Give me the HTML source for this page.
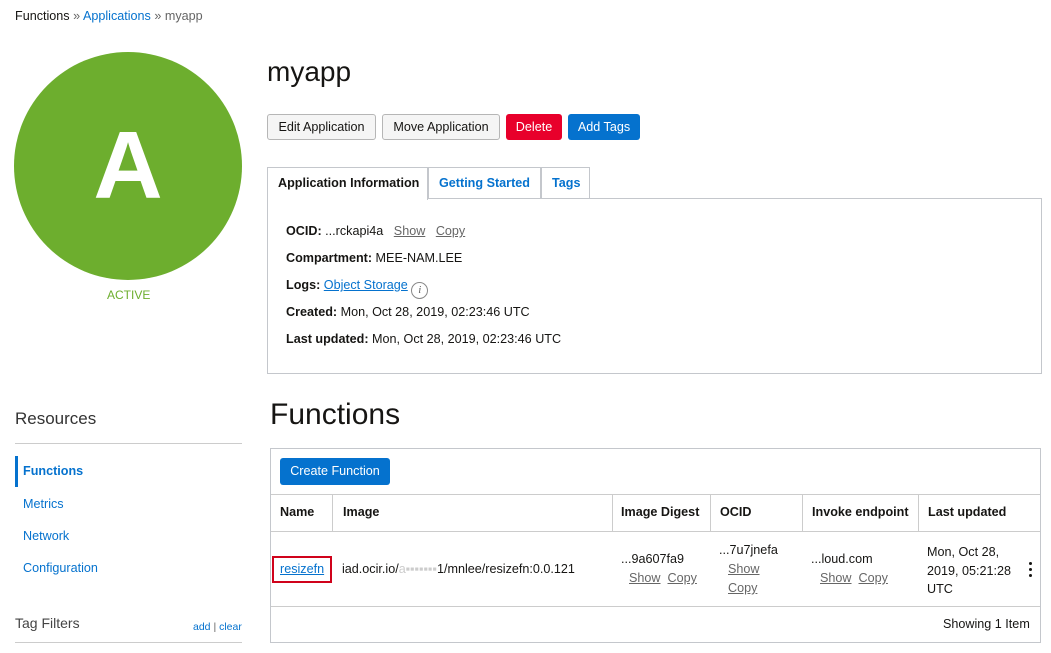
<!DOCTYPE html>
<html><head><meta charset="utf-8"><style>
*{margin:0;padding:0;box-sizing:border-box}
body{width:1051px;height:653px;background:#fff;font-family:"Liberation Sans",Arial,sans-serif;color:#161513;font-size:12.6px;position:relative;overflow:hidden}
.a{position:absolute;white-space:nowrap}
.blue{color:#0572ce}
.btn{position:absolute;height:26px;top:114px;border-radius:3px;font-size:12.6px;display:flex;align-items:center;justify-content:center}
.g{background:#f5f5f5;border:1px solid #b6b6b6;color:#161513}
.u{text-decoration:underline;color:#666}
b{font-weight:bold}
.lbl{position:absolute;left:286px}
.th{position:absolute;top:505px;font-weight:bold}
.vl{position:absolute;width:1px;background:#ccc;top:494px;height:38px}
</style></head><body>
<div class="a" style="left:15px;top:9px">Functions <span style="color:#666">»</span> <span class="blue">Applications</span> <span style="color:#666">» myapp</span></div>
<div class="a" style="left:14px;top:52px;width:228px;height:228px;border-radius:50%;background:#6dae2e;color:#fff;font-weight:bold;font-size:96px;text-align:center;line-height:228px">A</div>
<div class="a" style="left:107px;top:288px;color:#6dae2e;font-size:12px">ACTIVE</div>
<div class="a" style="left:267px;top:56px;font-size:28px">myapp</div>
<div class="btn g" style="left:267px;width:109px">Edit Application</div>
<div class="btn g" style="left:382px;width:118px">Move Application</div>
<div class="btn" style="left:506px;width:56px;background:#e8002b;color:#fff">Delete</div>
<div class="btn" style="left:568px;width:72px;background:#0572ce;color:#fff">Add Tags</div>
<div class="a" style="left:267px;top:198px;width:775px;height:176px;border:1px solid #c4c7cc"></div>
<div class="a" style="left:267px;top:167px;width:161px;height:33px;border:1px solid #c4c7cc;border-bottom:none;background:#fff;font-weight:bold;padding:8px 0 0 10px">Application Information</div>
<div class="a" style="left:428px;top:167px;width:113px;height:31px;border:1px solid #c4c7cc;border-bottom:none;font-weight:bold;color:#0572ce;padding:8px 0 0 10px">Getting Started</div>
<div class="a" style="left:541px;top:167px;width:49px;height:31px;border:1px solid #c4c7cc;border-bottom:none;font-weight:bold;color:#0572ce;padding:8px 0 0 10px">Tags</div>
<div class="lbl" style="top:224px"><b>OCID:</b> ...rckapi4a &nbsp; <span class="u">Show</span> &nbsp; <span class="u">Copy</span></div>
<div class="lbl" style="top:251px"><b>Compartment:</b> MEE-NAM.LEE</div>
<div class="lbl" style="top:278px"><b>Logs:</b> <span class="blue" style="text-decoration:underline">Object Storage</span> <span style="display:inline-block;width:17px;height:17px;border:1px solid #888;border-radius:50%;text-align:center;font-size:11px;font-style:italic;font-family:'Liberation Serif',serif;color:#666;line-height:15px;vertical-align:-4px">i</span></div>
<div class="lbl" style="top:305px"><b>Created:</b> Mon, Oct 28, 2019, 02:23:46 UTC</div>
<div class="lbl" style="top:332px"><b>Last updated:</b> Mon, Oct 28, 2019, 02:23:46 UTC</div>
<div class="a" style="left:15px;top:409px;font-size:17px;color:#333">Resources</div>
<div class="a" style="left:15px;top:443px;width:227px;height:1px;background:#ccc"></div>
<div class="a" style="left:15px;top:456px;width:3px;height:31px;background:#0572ce"></div>
<div class="a" style="left:23px;top:464px;font-weight:bold;color:#0572ce">Functions</div>
<div class="a blue" style="left:23px;top:497px">Metrics</div>
<div class="a blue" style="left:23px;top:529px">Network</div>
<div class="a blue" style="left:23px;top:561px">Configuration</div>
<div class="a" style="left:15px;top:615px;font-size:14px;color:#444">Tag Filters</div>
<div class="a blue" style="left:193px;top:621px;font-size:10.5px">add <span style="color:#666">|</span> clear</div>
<div class="a" style="left:15px;top:642px;width:227px;height:1px;background:#ccc"></div>
<div class="a" style="left:270px;top:398px;font-size:30px">Functions</div>
<div class="a" style="left:270px;top:448px;width:771px;height:195px;border:1px solid #c4c7cc"></div>
<div class="a" style="left:280px;top:458px;width:110px;height:27px;background:#0572ce;color:#fff;border-radius:3px;text-align:center;line-height:27px">Create Function</div>
<div class="a" style="left:271px;top:494px;width:769px;height:1px;background:#ccc"></div>
<div class="a" style="left:271px;top:531px;width:769px;height:1px;background:#ccc"></div>
<div class="a" style="left:271px;top:606px;width:769px;height:1px;background:#ccc"></div>
<div class="vl" style="left:332px"></div><div class="vl" style="left:612px"></div><div class="vl" style="left:710px"></div><div class="vl" style="left:802px"></div><div class="vl" style="left:918px"></div>
<div class="th" style="left:280px">Name</div><div class="th" style="left:343px">Image</div><div class="th" style="left:621px">Image Digest</div><div class="th" style="left:720px">OCID</div><div class="th" style="left:812px">Invoke endpoint</div><div class="th" style="left:928px">Last updated</div>
<div class="a" style="left:272px;top:556px;width:60px;height:27px;border:2px solid #d0021b"></div>
<div class="a blue" style="left:280px;top:562px;text-decoration:underline">resizefn</div>
<div class="a" style="left:342px;top:562px">iad.ocir.io/<span style="color:#ccc">a▪▪▪▪▪▪▪</span>1/mnlee/resizefn:0.0.121</div>
<div class="a" style="left:621px;top:552px">...9a607fa9</div>
<div class="a" style="left:629px;top:571px"><span class="u">Show</span> &nbsp;<span class="u">Copy</span></div>
<div class="a" style="left:719px;top:543px">...7u7jnefa</div>
<div class="a u" style="left:728px;top:562px">Show</div>
<div class="a u" style="left:728px;top:581px">Copy</div>
<div class="a" style="left:811px;top:552px">...loud.com</div>
<div class="a" style="left:820px;top:571px"><span class="u">Show</span> &nbsp;<span class="u">Copy</span></div>
<div class="a" style="left:927px;top:543px;line-height:18.5px;white-space:normal;width:95px">Mon, Oct 28, 2019, 05:21:28 UTC</div>
<div class="a" style="left:1029px;top:562px;width:3px;height:3px;border-radius:50%;background:#161513"></div>
<div class="a" style="left:1029px;top:568px;width:3px;height:3px;border-radius:50%;background:#161513"></div>
<div class="a" style="left:1029px;top:574px;width:3px;height:3px;border-radius:50%;background:#161513"></div>
<div class="a" style="left:943px;top:617px">Showing 1 Item</div>
</body></html>
